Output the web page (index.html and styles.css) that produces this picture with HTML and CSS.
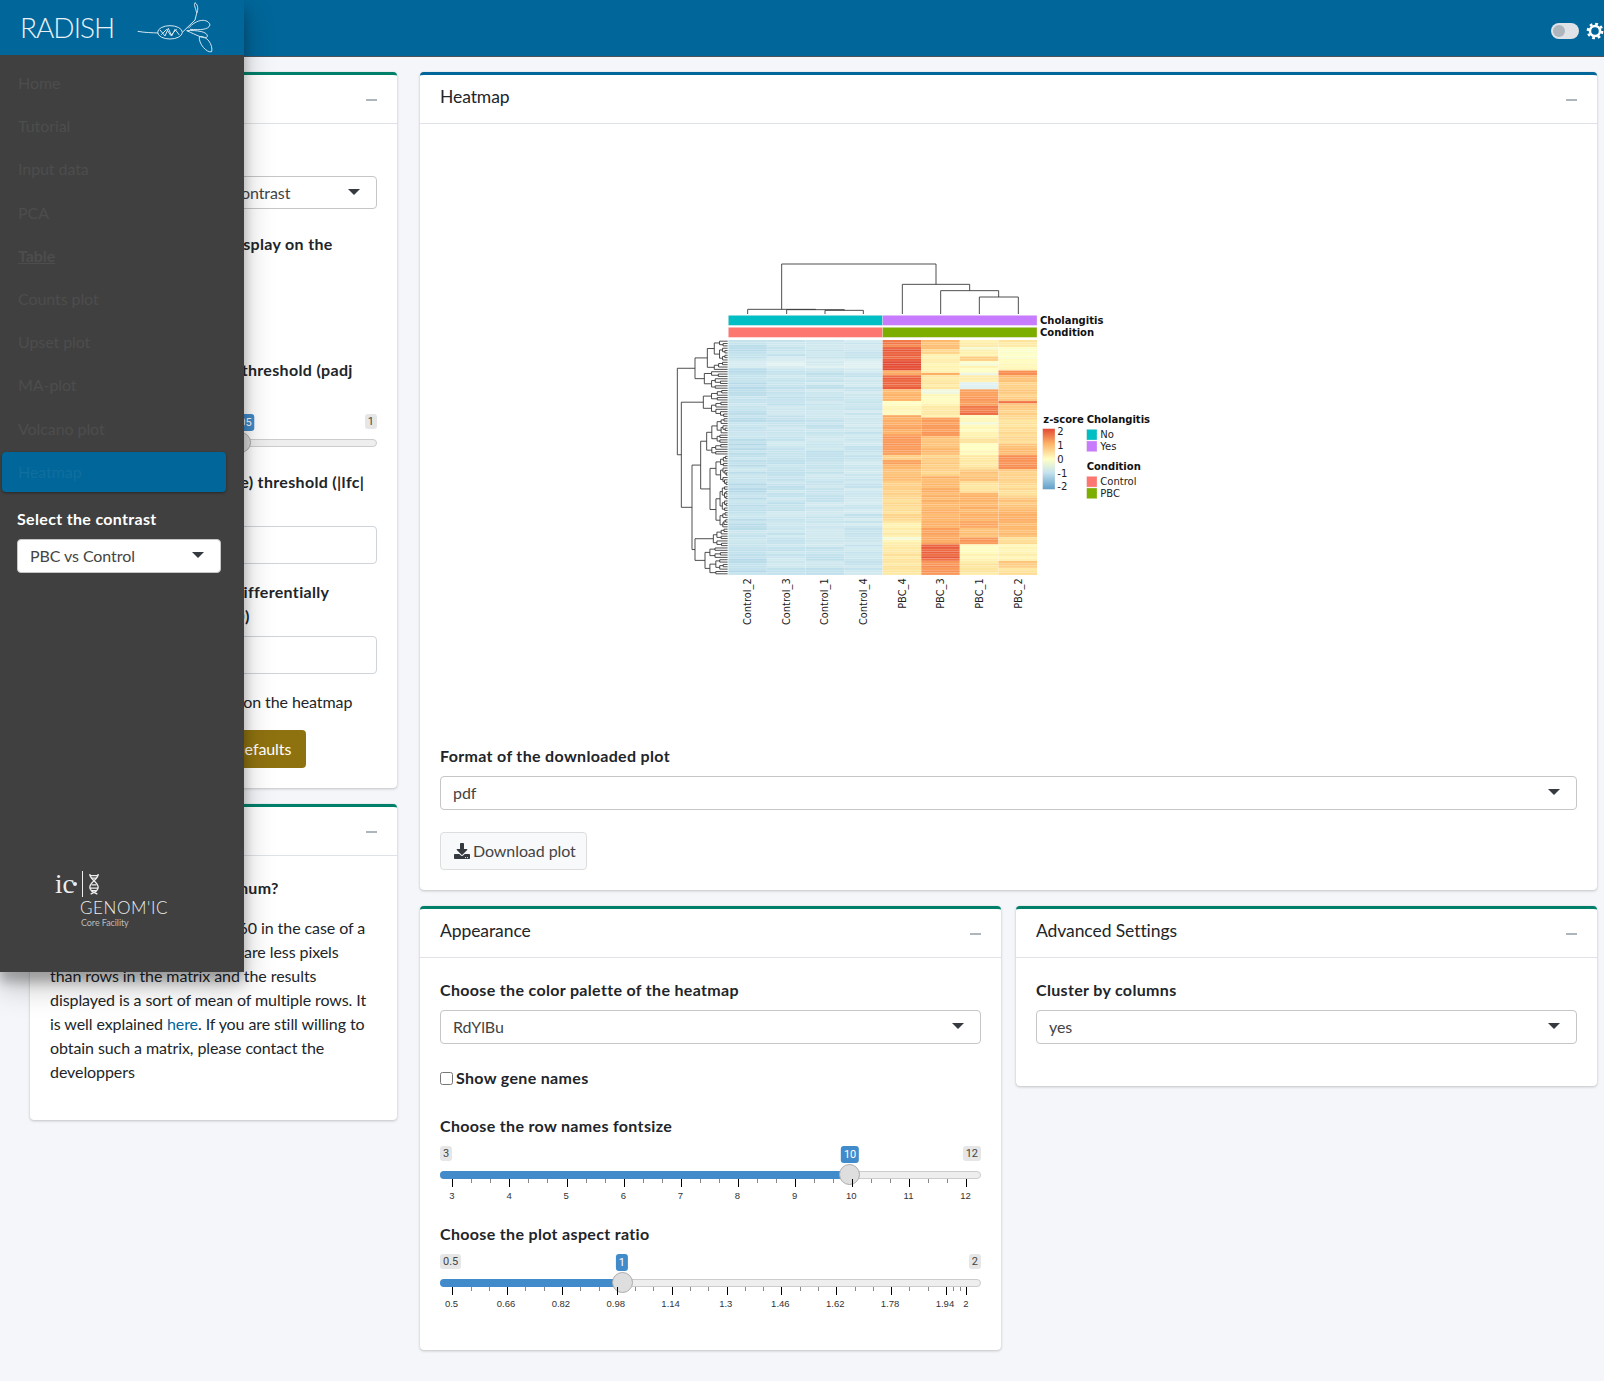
FILE: index.html
```html
<!DOCTYPE html>
<html lang="en">
<head>
    <meta charset="UTF-8">
    <title>RADISH</title>
    <link rel="stylesheet" href="styles.css">
</head>
<body>
    <header class="navbar">
        <div class="toggle"><span class="toggle-knob"></span></div>
        <svg class="gear" viewBox="0 0 20 20" width="18" height="18">
            <circle cx="10" cy="10" r="5.6" fill="none" stroke="#fff" stroke-width="2.8"/>
            <circle cx="10" cy="10" r="8" fill="none" stroke="#fff" stroke-width="2.6" stroke-dasharray="3.1 3.18"/>
        </svg>
    </header>

    <aside class="sidebar">
        <div class="brand">
            <span class="brand-text">RADISH</span>
            <svg class="brand-logo" viewBox="405 0 240 165" width="80" height="55" fill="none" stroke="#d4e6f0" stroke-width="3">
                <path d="M413 94C435 98 455 98 475 99"/>
                <ellipse cx="510" cy="97" rx="37" ry="20"/>
                <path d="M480 90L495 108L505 85L515 108L525 88L538 105M484 104L500 88L512 106L530 88"/>
                <path d="M547 97L585 60L590 40C588 25 580 15 585 8C595 15 595 30 590 40"/>
                <path d="M565 85C590 55 625 55 630 75C625 90 600 90 570 88"/>
                <path d="M560 92C590 90 625 95 622 110C615 120 590 105 560 92"/>
                <path d="M598 110C595 130 620 160 635 155C640 135 620 105 598 110"/>
            </svg>
        </div>
        <nav class="side-menu">
            <a class="side-item">Home</a>
            <a class="side-item">Tutorial</a>
            <a class="side-item">Input data</a>
            <a class="side-item">PCA</a>
            <a class="side-item side-item-bold">Table</a>
            <a class="side-item">Counts plot</a>
            <a class="side-item">Upset plot</a>
            <a class="side-item">MA-plot</a>
            <a class="side-item">Volcano plot</a>
            <a class="side-item side-item-active">Heatmap</a>
        </nav>
        <div class="side-form">
            <label class="field-label side-label">Select the contrast</label>
            <div class="select select-side">PBC vs Control<span class="caret"></span></div>
        </div>
        <div class="partner">
            <div class="partner-top">
                <span class="partner-ic">ic</span><span class="partner-dot"></span><span class="partner-bar"></span>
                <svg class="partner-dna" viewBox="0 0 12 26" width="10" height="22" fill="none" stroke="#eee" stroke-width="1.6">
                    <path d="M1 1C1 8 11 10 11 17C11 21 8 23 2 25M11 1C11 8 1 10 1 17C1 21 4 23 10 25"/>
                    <path d="M1 3H11M3 6H9M3 14H9M1 18H11M3 21H9"/>
                </svg>
            </div>
            <div class="partner-name">GENOM'IC</div>
            <div class="partner-sub">Core Facility</div>
        </div>
    </aside>

    <main class="content">
        <div class="column-left">
            <section class="card card-green">
                <div class="card-header"><h3 class="card-title">Settings</h3><span class="minus"></span></div>
                <div class="card-body">
                    <label class="field-label">Select the contrast</label>
                    <div class="select select-settings">Choose the selected DE contrast<span class="caret"></span></div>
                    <label class="field-label mt-23">Number of the genes to display on the<br>heatmap</label>
                    <div class="spacer-70"></div>
                    <label class="field-label">Pick the adjusted p-value threshold (padj<br>value)</label>
                    <div class="slider mt-8" data-fill="58.4" data-value="0.05" data-min="0" data-max="1"></div>
                    <label class="field-label mt-23">Log fold change (log2 scale) threshold (|lfc|<br>value)</label>
                    <div class="text-input mt-8"></div>
                    <label class="field-label mt-16">Choose the maximum of differentially<br>expressed genes (max 500)</label>
                    <div class="text-input mt-8"></div>
                    <div class="check-line mt-16">Display the sample headers on the heatmap</div>
                    <button class="btn-reset">Reset the inputs to their defaults</button>
                </div>
            </section>
            <section class="card card-green card-note">
                <div class="card-header"><h3 class="card-title">Help</h3><span class="minus"></span></div>
                <div class="card-body">
                    <label class="field-label">Why is there such a maximum?</label>
                    <p class="note-text">The heatmap is limited to 560 in the case of a<br>large dataset because there are less pixels<br>than rows in the matrix and the results<br>displayed is a sort of mean of multiple rows. It<br>is well explained <a class="link">here</a>. If you are still willing to<br>obtain such a matrix, please contact the<br>developpers</p>
                </div>
            </section>
        </div>

        <div class="column-right">
            <section class="card card-blue">
                <div class="card-header"><h3 class="card-title">Heatmap</h3><span class="minus"></span></div>
                <div class="card-body">
                    <div class="plot-area">
                        <svg id="heatmap" class="heatmap" viewBox="0 0 1500 1170" width="500" height="390">
                            <g id="heat-cells"></g>
                            <g id="row-tree" class="tree"></g>
                            <path class="tree" d="M610 192V181H495V192M553 181V179H380V192M467 179V178H263V192M365 178V42H828V103M727 192V103H929V122M842 192V122H1016V141M958 192V141H1075V192"/>
                            <rect class="annot" x="205" y="196" width="463" height="30" fill="#00bfc4"/>
                            <rect class="annot" x="668" y="196" width="463" height="30" fill="#c77cff"/>
                            <rect class="annot" x="205" y="232" width="463" height="30" fill="#fd7670"/>
                            <rect class="annot" x="668" y="232" width="463" height="30" fill="#7cae00"/>
                            <text class="hm-bold" x="1140" y="221">Cholangitis</text>
                            <text class="hm-bold" x="1140" y="257">Condition</text>
                            <text class="hm-col" transform="translate(272 985) rotate(-90)">Control_2</text>
                            <text class="hm-col" transform="translate(389 985) rotate(-90)">Control_3</text>
                            <text class="hm-col" transform="translate(505 985) rotate(-90)">Control_1</text>
                            <text class="hm-col" transform="translate(620 985) rotate(-90)">Control_4</text>
                            <text class="hm-col" transform="translate(737 985) rotate(-90)">PBC_4</text>
                            <text class="hm-col" transform="translate(852 985) rotate(-90)">PBC_3</text>
                            <text class="hm-col" transform="translate(968 985) rotate(-90)">PBC_1</text>
                            <text class="hm-col" transform="translate(1085 985) rotate(-90)">PBC_2</text>
                            <defs>
                                <linearGradient id="zscale" x1="0" y1="0" x2="0" y2="1">
                                    <stop offset="0" stop-color="#e34933"/>
                                    <stop offset="0.25" stop-color="#fdb468"/>
                                    <stop offset="0.5" stop-color="#ffffc4"/>
                                    <stop offset="0.72" stop-color="#c6e4ee"/>
                                    <stop offset="1" stop-color="#5f9ec9"/>
                                </linearGradient>
                            </defs>
                            <text class="hm-bold" x="1150" y="518">z-score</text>
                            <rect class="annot" x="1148" y="536" width="37" height="182" fill="url(#zscale)"/>
                            <text class="hm-legend" x="1192" y="554">2</text>
                            <text class="hm-legend" x="1192" y="596">1</text>
                            <text class="hm-legend" x="1192" y="638">0</text>
                            <text class="hm-legend" x="1192" y="680">-1</text>
                            <text class="hm-legend" x="1192" y="719">-2</text>
                            <text class="hm-bold" x="1280" y="518">Cholangitis</text>
                            <rect class="annot" x="1280" y="538" width="31" height="32" fill="#00bfc4"/>
                            <rect class="annot" x="1280" y="573" width="31" height="32" fill="#c77cff"/>
                            <text class="hm-legend" x="1321" y="563">No</text>
                            <text class="hm-legend" x="1321" y="600">Yes</text>
                            <text class="hm-bold" x="1280" y="660">Condition</text>
                            <rect class="annot" x="1280" y="679" width="31" height="32" fill="#fd7670"/>
                            <rect class="annot" x="1280" y="714" width="31" height="32" fill="#7cae00"/>
                            <text class="hm-legend" x="1321" y="704">Control</text>
                            <text class="hm-legend" x="1321" y="740">PBC</text>
                        </svg>
                    </div>
                    <label class="field-label">Format of the downloaded plot</label>
                    <div class="select">pdf<span class="caret"></span></div>
                    <button class="btn-download">
                        <svg class="download-icon" viewBox="0 0 512 512" width="16" height="16"><path fill="#343a40" d="M216 0h80c13.3 0 24 10.7 24 24v168h87.7c17.8 0 26.7 21.5 14.1 34.1L269.7 378.3c-7.5 7.5-19.8 7.5-27.3 0L90.1 226.1c-12.6-12.6-3.7-34.1 14.1-34.1H192V24c0-13.3 10.7-24 24-24zm296 376v112c0 13.3-10.7 24-24 24H24c-13.3 0-24-10.7-24-24V376c0-13.3 10.7-24 24-24h146.7l49 49c20.1 20.1 52.5 20.1 72.6 0l49-49H488c13.3 0 24 10.7 24 24zm-124 88c0-11-9-20-20-20s-20 9-20 20 9 20 20 20 20-9 20-20zm64 0c0-11-9-20-20-20s-20 9-20 20 9 20 20 20 20-9 20-20z"/></svg>
                        Download plot
                    </button>
                </div>
            </section>

            <div class="settings-row">
                <section class="card card-green card-appearance">
                    <div class="card-header"><h3 class="card-title">Appearance</h3><span class="minus"></span></div>
                    <div class="card-body">
                        <label class="field-label">Choose the color palette of the heatmap</label>
                        <div class="select">RdYlBu<span class="caret"></span></div>
                        <label class="check-label"><input type="checkbox" class="check-box"> Show gene names</label>
                        <label class="field-label mt-24">Choose the row names fontsize</label>
                        <div class="slider mt-7" data-fill="75.8" data-value="10" data-min="3" data-max="12" data-ticks="3,4,5,6,7,8,9,10,11,12" data-first="12.3" data-step="57.1"></div>
                        <label class="field-label mt-18">Choose the plot aspect ratio</label>
                        <div class="slider mt-8" data-fill="33.6" data-value="1" data-min="0.5" data-max="2" data-ticks="0.5,0.66,0.82,0.98,1.14,1.3,1.46,1.62,1.78,1.94,2" data-first="12.3" data-step="54.86"></div>
                    </div>
                </section>
                <section class="card card-green card-advanced">
                    <div class="card-header"><h3 class="card-title">Advanced Settings</h3><span class="minus"></span></div>
                    <div class="card-body">
                        <label class="field-label">Cluster by columns</label>
                        <div class="select">yes<span class="caret"></span></div>
                    </div>
                </section>
            </div>
        </div>
    </main>

    <script src="app.js"></script>
</body>
</html>
```

FILE: styles.css
```css
* {
    box-sizing: border-box;
}
body {
    margin: 0;
    min-height: 1381px;
    background-color: #f4f6f9;
    color: #212529;
    font-family: "Lato", "Noto Sans", sans-serif;
    font-size: 16px;
    line-height: 24px;
    letter-spacing: -0.08px;
    overflow: hidden;
}

/* top bar */
.navbar {
    height: 57px;
    background-color: #016699;
    border-bottom: 1px solid #4b545c;
    display: flex;
    justify-content: flex-end;
    align-items: center;
    gap: 7px;
    padding-top: 6px;
}
.toggle {
    width: 28px;
    height: 16px;
    border-radius: 8px;
    background-color: #dfe3e7;
    padding: 2px 0 0 2px;
}
.toggle-knob {
    display: block;
    width: 12px;
    height: 12px;
    border-radius: 50%;
    background-color: #adb5bd;
}
.gear {
    flex: none;
}

/* sidebar */
.sidebar {
    position: absolute;
    left: 0;
    top: 0;
    width: 244px;
    height: 972px;
    background-color: #404040;
    box-shadow: 0 14px 28px rgba(0, 0, 0, 0.25), 0 10px 10px rgba(0, 0, 0, 0.22);
    z-index: 10;
}
.brand {
    height: 55px;
    background-color: #016699;
    position: relative;
    padding-left: 20px;
}
.brand-text {
    color: #e8f1f6;
    font-size: 28px;
    font-weight: 300;
    line-height: 55px;
    letter-spacing: -1px;
}
.brand-logo {
    position: absolute;
    left: 135px;
    top: 0;
}
.side-menu {
    padding: 8px 0 0 2px;
}
.side-item {
    display: block;
    width: 224px;
    height: 40px;
    margin-bottom: 3.2px;
    padding-left: 16px;
    line-height: 40px;
    color: #4d4d4d;
    border-radius: 4px;
}
.side-item-bold {
    font-weight: 700;
    text-decoration: underline;
}
.side-item-active {
    background-color: #016699;
    color: #0f6f9f;
    box-shadow: 0 1px 3px rgba(0, 0, 0, 0.4);
}
.side-form {
    padding: 12px 23px 0 17px;
}
.side-label {
    color: #fff;
}
.partner {
    margin: 0 0 0 55px;
    padding-top: 298px;
    color: #eee;
}
.partner-top {
    display: flex;
    align-items: center;
    height: 27px;
}
.partner-ic {
    font-family: "Liberation Serif", serif;
    font-size: 27px;
    line-height: 27px;
    width: 17px;
}
.partner-dot {
    width: 4px;
    height: 4px;
    margin-left: 1px;
    border-radius: 50%;
    background-color: #eee;
}
.partner-bar {
    width: 1px;
    height: 26px;
    margin: 0 6px 0 5px;
    background-color: #eee;
}
.partner-name {
    margin: 0 0 0 25px;
    font-size: 17px;
    font-weight: 300;
    line-height: 20px;
    letter-spacing: 0.6px;
}
.partner-sub {
    margin-left: 26px;
    font-size: 9px;
    line-height: 10px;
    color: #bbb;
}

/* page */
.content {
    display: grid;
    grid-template-columns: 367px 1177px;
    column-gap: 23px;
    padding: 15px 0 0 30px;
}
.column-left, .column-right {
    display: flex;
    flex-direction: column;
    gap: 15px;
}
.column-left {
    gap: 16px;
}
.settings-row {
    display: flex;
    align-items: flex-start;
    gap: 15px;
    margin-top: 1px;
}
.card {
    background-color: #fff;
    border-radius: 4px;
    border-top: 3px solid #00806a;
    box-shadow: 0 0 1px rgba(0, 0, 0, 0.13), 0 1px 3px rgba(0, 0, 0, 0.2);
}
.card-blue {
    border-top-color: #016699;
}
.card-appearance {
    width: 581px;
    height: 444px;
}
.card-advanced {
    width: 581px;
    height: 180px;
}
.card-note {
    height: 316px;
}
.card-header {
    height: 49px;
    display: flex;
    justify-content: space-between;
    align-items: center;
    padding: 0 20px;
    border-bottom: 1px solid #dfe2e6;
}
.card-title {
    margin: -5px 0 0;
    font-size: 17.5px;
    font-weight: 400;
}
.minus {
    width: 11px;
    height: 2px;
    margin-top: 1px;
    background-color: #adb5bd;
}
.card-body {
    padding: 20px;
}

/* form bits */
.field-label {
    display: block;
    font-weight: 700;
    letter-spacing: 0.33px;
    white-space: nowrap;
    margin-bottom: 8px;
}
.select {
    position: relative;
    height: 34px;
    padding-left: 12px;
    line-height: 31px;
    background-color: #fff;
    color: #444;
    border: 1px solid #c6c6c6;
    border-radius: 4px;
    white-space: nowrap;
}
.select-side {
    width: 204px;
}
.select-settings {
    height: 33px;
}
.caret {
    position: absolute;
    right: 16px;
    top: 12px;
    border-left: 6px solid transparent;
    border-right: 6px solid transparent;
    border-top: 6px solid #343a40;
}
.text-input {
    height: 38px;
    border: 1px solid #ced4da;
    border-radius: 4px;
    background-color: #fff;
}
.check-line {
    white-space: nowrap;
}
.check-label {
    display: flex;
    align-items: center;
    gap: 3px;
    height: 24px;
    margin-top: 22px;
    font-weight: 700;
    letter-spacing: 0.33px;
}
.check-box {
    width: 13px;
    height: 13px;
    margin: 0;
}
.btn-reset {
    display: block;
    height: 38px;
    width: 256px;
    margin-top: 16px;
    padding: 0;
    background-color: #8f7210;
    color: #fff;
    border: none;
    border-radius: 4px;
    font: inherit;
    letter-spacing: inherit;
}
.btn-download {
    display: flex;
    align-items: center;
    gap: 3px;
    height: 38px;
    width: 147px;
    margin-top: 22px;
    padding: 0 0 0 13px;
    background-color: #f8f9fa;
    color: #444;
    border: 1px solid #ddd;
    border-radius: 4px;
    font: inherit;
    letter-spacing: inherit;
}
.note-text {
    margin: 16px 0 0;
    white-space: nowrap;
}
.link {
    color: #016699;
}
.mt-7 { margin-top: 7px; }
.mt-8 { margin-top: 8px; }
.mt-16 { margin-top: 16px; }
.mt-18 { margin-top: 18px; }
.mt-23 { margin-top: 23px; }
.mt-24 { margin-top: 24px; }
.spacer-70 { height: 70px; }

/* heatmap */
.plot-area {
    height: 600px;
    padding: 106px 0 0 220px;
}
.heatmap {
    display: block;
    letter-spacing: 0;
}
.tree {
    fill: none;
    stroke: #333;
    stroke-width: 2.6;
}
.annot {
    stroke: #f3e6e6;
    stroke-width: 1;
}
.hm-bold {
    font-family: "DejaVu Sans", sans-serif;
    font-size: 30px;
    font-weight: 700;
    fill: #111;
}
.hm-legend {
    font-family: "DejaVu Sans", sans-serif;
    font-size: 30px;
    fill: #222;
}
.hm-col {
    font-family: "DejaVu Sans", sans-serif;
    font-size: 29.5px;
    fill: #222;
    text-anchor: end;
}

/* sliders */
.slider {
    position: relative;
    font-family: "Liberation Sans", sans-serif;
    letter-spacing: 0;
}
.slider-ends {
    display: flex;
    justify-content: space-between;
    height: 25px;
    font-family: "Roboto", sans-serif;
    font-size: 11px;
    line-height: 15px;
    color: #444;
}
.slider-end {
    height: 15px;
    padding: 0 3px;
    background-color: #e6e6e6;
    border-radius: 3px;
}
.slider-value {
    position: absolute;
    top: 0;
    height: 17px;
    padding: 1px 3px;
    transform: translateX(-50%);
    background-color: #428bca;
    color: #fff;
    border-radius: 3px;
    font-family: "Roboto", sans-serif;
    font-size: 11px;
    line-height: 15px;
}
.slider-track {
    position: relative;
    height: 8px;
    background-color: #eee;
    border: 1px solid #ccc;
    border-radius: 4px;
}
.slider-fill {
    position: absolute;
    left: -1px;
    top: -1px;
    height: 8px;
    background-color: #428bca;
    border-radius: 4px 0 0 4px;
}
.slider-handle {
    position: absolute;
    top: -8px;
    width: 21px;
    height: 21px;
    margin-left: -10.5px;
    background-color: #dedede;
    border: 1px solid #ababab;
    border-radius: 50%;
}
.slider-grid {
    position: relative;
    height: 25px;
}
.tick {
    position: absolute;
    top: 0;
    width: 1px;
    height: 4px;
    background-color: #888;
}
.tick-big {
    height: 8px;
    background-color: #000;
}
.tick-label {
    position: absolute;
    top: 11px;
    transform: translateX(-56%);
    font-size: 9.5px;
    line-height: 12px;
    color: #333;
}
```

FILE: app.js
```js
// sliders: ticks are placed from the values in the data attributes
document.querySelectorAll('.slider').forEach(slider => {
    const d = slider.dataset;
    slider.innerHTML = `
        <div class="slider-ends"><span class="slider-end">${d.min}</span><span class="slider-end">${d.max}</span></div>
        <span class="slider-value" style="left: ${d.fill}%">${d.value}</span>
        <div class="slider-track">
            <div class="slider-fill" style="width: ${d.fill}%"></div>
            <div class="slider-handle" style="left: ${d.fill}%"></div>
        </div>`;
    if (!d.ticks) return;

    const grid = document.createElement('div');
    grid.className = 'slider-grid';
    const first = Number(d.first);
    const step = Number(d.step);
    const addTick = (x, big) => {
        const t = document.createElement('span');
        t.className = big ? 'tick tick-big' : 'tick';
        t.style.left = x + 'px';
        grid.appendChild(t);
    };
    const ticks = d.ticks.split(',');
    ticks.forEach((label, i) => {
        // the last tick of the ratio slider is closer than the others
        const x = i === 10 ? first + 514 : first + i * step;
        addTick(x, true);
        const l = document.createElement('span');
        l.className = 'tick-label';
        l.style.left = x + 'px';
        l.textContent = label;
        grid.appendChild(l);
        if (i < ticks.length - 1 && i < 9) {
            addTick(x + step / 3, false);
            addTick(x + 2 * step / 3, false);
        }
    });
    if (ticks.length === 11) {
        addTick(first + 9 * step + 7, false);
        addTick(first + 9 * step + 14, false);
    }
    slider.appendChild(grid);
});

// heatmap, in the coordinates of the svg viewBox
const SVG_NS = 'http://www.w3.org/2000/svg';
const ROWS = 100;
const TOP = 270;
const ROW_H = 7.05;

let seed = 12345;
function rnd() {
    seed = (seed * 1103515245 + 12345) % 2147483648;
    return seed / 2147483648;
}

const stops = [
    [-2.2, [95, 158, 201]], [-1.2, [191, 224, 236]], [-0.6, [228, 243, 243]],
    [0, [255, 255, 196]], [0.5, [254, 226, 154]], [1, [253, 180, 104]],
    [1.5, [248, 141, 82]], [2, [227, 73, 51]]
];
function color(v) {
    v = Math.max(-2.2, Math.min(2, v));
    for (let i = 1; i < stops.length; i++) {
        if (v <= stops[i][0]) {
            const [a, ca] = stops[i - 1];
            const [b, cb] = stops[i];
            const t = (v - a) / (b - a);
            return `rgb(${ca.map((c, k) => Math.round(c + (cb[k] - c) * t)).join(',')})`;
        }
    }
    return 'rgb(227,73,51)';
}

// [end y, value] read from the plot, column by column
const pbcColumns = [
    [[290,1.6],[330,1.8],[358,2],[378,1.1],[420,1.8],[455,1],[498,0.1],[560,1.1],[612,1.35],[630,0.6],[640,1.2],[690,0.9],[735,0.7],[815,0.55],[860,0.3],[868,-0.3],[885,0.2],[975,0.45]],
    [[300,0.9],[315,0.6],[340,0.3],[365,0.15],[375,1],[420,0.4],[435,-0.4],[465,0.1],[500,0.3],[560,1.3],[612,0.9],[680,0.7],[735,1],[830,1],[885,1.2],[935,1.8],[975,1.4]],
    [[288,0.3],[295,-0.3],[320,0.2],[332,0.7],[350,-0.1],[365,0.1],[375,-0.5],[393,0.3],[420,-0.7],[465,1.3],[498,1.7],[515,0.1],[525,-0.3],[560,0.15],[578,0.4],[612,0.1],[655,0.4],[690,0.8],[730,0.45],[810,1],[835,1.15],[860,0.9],[885,1.3],[912,0.05],[935,0.2],[975,0.4]],
    [[288,0.4],[335,0],[358,0.1],[378,1.4],[395,0.9],[455,0.7],[463,1.6],[500,0.7],[540,0.5],[578,0.6],[612,0.9],[655,1.4],[700,0.7],[740,0.55],[780,0.8],[830,1],[865,0.9],[885,0.5],[930,0.2],[955,0.8],[975,0.5]]
];
const controlBase = [-1.15, -1.05, -1.05, -1];

function segValue(segs, y) {
    for (const [end, v] of segs) {
        if (y < end) return v;
    }
    return segs[segs.length - 1][1];
}

const cells = document.getElementById('heat-cells');
function addCell(x, y, w, h, fill) {
    const r = document.createElementNS(SVG_NS, 'rect');
    r.setAttribute('x', x);
    r.setAttribute('y', y);
    r.setAttribute('width', w);
    r.setAttribute('height', h);
    r.setAttribute('fill', fill);
    cells.appendChild(r);
}
for (let row = 0; row < ROWS; row++) {
    const y = TOP + row * ROW_H;
    for (let col = 0; col < 8; col++) {
        const x = 205 + col * 115.75;
        let v;
        if (col < 4) {
            const light = y > 325 && y < 350 ? 0.3 : 0;
            v = controlBase[col] + light + (rnd() - 0.5) * 0.35;
        } else {
            v = segValue(pbcColumns[col - 4], y + 3) + (rnd() - 0.5) * 0.22;
        }
        addCell(x, y, 115.75, ROW_H, color(v));
        // thin light line between the rows
        addCell(x, y + ROW_H - 1.2, 115.75, 1.2, 'rgba(255,255,255,0.22)');
    }
}
for (let col = 1; col < 8; col++) {
    addCell(205 + col * 115.75 - 0.6, TOP, 1.2, ROWS * ROW_H, 'rgba(255,255,255,0.3)');
}

// row dendrogram: top branches by hand, the small ones are generated
function auto(n, depth) {
    if (n === 1) return null;
    const a = Math.max(1, Math.min(n - 1, Math.round(n * (0.3 + rnd() * 0.4))));
    const next = n <= 3 ? depth * 0.6 : depth * (0.62 + rnd() * 0.18);
    return { depth, kids: [auto(a, next), auto(n - a, next)], n };
}
const node = (x, a, b) => ({ depth: 205 - x, kids: [a, b] });
const sub = (x, n) => auto(n, 205 - x);

const rowTree = node(52,
    node(105, sub(142, 13), sub(133, 8)),
    node(64,
        sub(130, 12),
        node(96,
            node(122, sub(140, 16), sub(150, 31)),
            node(105, sub(160, 8), sub(135, 12))
        )
    )
);

let leaf = 0;
let treePath = '';
function drawNode(n) {
    if (!n) {
        const y = TOP + (leaf++ + 0.5) * ROW_H;
        return { x: 203, y };
    }
    const a = drawNode(n.kids[0]);
    const b = drawNode(n.kids[1]);
    const x = 205 - n.depth;
    treePath += `M${a.x} ${a.y}H${x}V${b.y}H${b.x}`;
    return { x, y: (a.y + b.y) / 2 };
}
drawNode(rowTree);
const treeEl = document.createElementNS(SVG_NS, 'path');
treeEl.setAttribute('d', treePath);
document.getElementById('row-tree').appendChild(treeEl);
```
